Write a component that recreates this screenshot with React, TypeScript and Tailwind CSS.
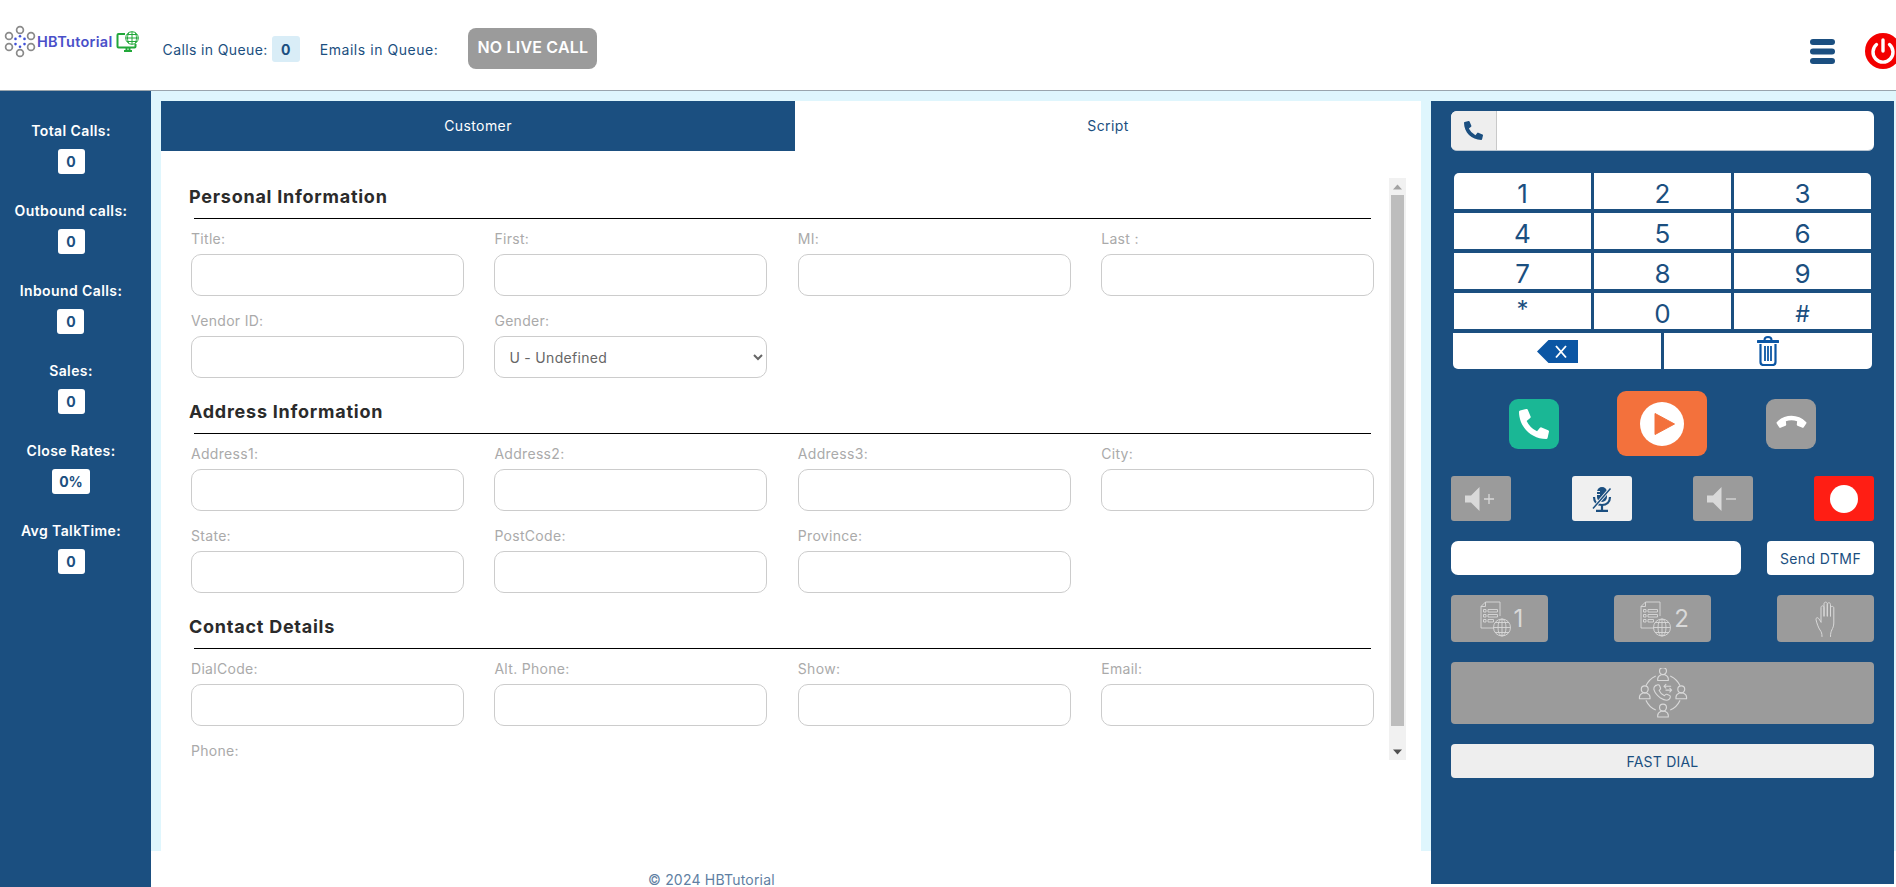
import React from "react";
import { FaPhoneAlt } from "react-icons/fa";

const stats = [
  ["Total Calls:", "0"],
  ["Outbound calls:", "0"],
  ["Inbound Calls:", "0"],
  ["Sales:", "0"],
  ["Close Rates:", "0%"],
  ["Avg TalkTime:", "0"],
];

const sections: { title: string; fields: string[] }[] = [
  { title: "Personal Information", fields: ["Title:", "First:", "MI:", "Last :", "Vendor ID:", "Gender:"] },
  { title: "Address Information", fields: ["Address1:", "Address2:", "Address3:", "City:", "State:", "PostCode:", "Province:"] },
  { title: "Contact Details", fields: ["DialCode:", "Alt. Phone:", "Show:", "Email:", "Phone:"] },
];

function Logo() {
  const rings = [
    [16, 5],
    [27, 11],
    [27, 22],
    [16, 28],
    [5, 22],
    [5, 11],
  ];
  return (
    <div className="flex items-center ml-[4px] mt-[-7px]">
      <svg width="32" height="33" viewBox="0 0 32 33" fill="none">
        {rings.map(([x, y], i) => (
          <circle key={i} cx={x} cy={y} r="3.4" stroke="#8a8a8a" strokeWidth="1.7" />
        ))}
        {[0, 60, 120, 180, 240, 300].map((a) => (
          <circle
            key={a}
            cx={16 + 5.2 * Math.sin((a * Math.PI) / 180)}
            cy={16.5 - 5.2 * Math.cos((a * Math.PI) / 180)}
            r="1.3"
            fill="#3f51d8"
          />
        ))}
      </svg>
      <span className="ml-[1px] text-[14.5px] font-semibold text-[#4a50c9] tracking-[0.3px]">HBTutorial</span>
      <svg className="ml-[3px]" width="24" height="22" viewBox="0 0 24 22" fill="none">
        <path d="M9 3H2.5a1 1 0 0 0-1 1v11.5a1 1 0 0 0 1 1h16a1 1 0 0 0 1-1V13" stroke="#22a83a" strokeWidth="2" />
        <path d="M8 20h8M10.5 17v3M13.5 17v3" stroke="#22a83a" strokeWidth="2" />
        <circle cx="16" cy="7" r="6.3" fill="#fff" stroke="#22a83a" strokeWidth="1" />
        <path d="M9.8 7h12.4M16 .8v12.4M11 3.5h10M11 10.5h10M13 1.5c-2 3.5-2 7.5 0 11M19 1.5c2 3.5 2 7.5 0 11" stroke="#22a83a" strokeWidth="1" />
      </svg>
    </div>
  );
}

function Header() {
  return (
    <header className="h-[91px] shrink-0 flex items-center bg-white border-b border-[#9aa5ad] overflow-hidden text-[14px] text-[#1b4f80]">
      <Logo />
      <span className="ml-[23px] mt-[8px] tracking-[0.38px]">Calls in Queue:</span>
      <span className="ml-[4px] mt-[8px] w-[28px] h-[26px] flex items-center justify-center rounded-[3px] bg-[#d9edf7] font-bold">0</span>
      <span className="ml-[20px] mt-[8px] tracking-[0.55px]">Emails in Queue:</span>
      <div className="ml-[30px] mt-[7px] w-[129px] h-[41px] flex items-center justify-center rounded-[8px] bg-[#9b9b9b] text-white text-[16px] font-semibold tracking-[0.2px] pb-[3px]">
        NO LIVE CALL
      </div>
      <svg className="ml-auto mt-[12px]" width="25" height="25" viewBox="0 0 25 25" fill="#1b4f80">
        <rect x="0" y="0" width="25" height="6" rx="3" />
        <rect x="0" y="9.5" width="25" height="6" rx="3" />
        <rect x="0" y="19" width="25" height="6" rx="3" />
      </svg>
      <svg className="ml-[30px] mr-[-5px] mt-[12px] shrink-0" width="36" height="36" viewBox="0 0 36 36" fill="none">
        <circle cx="18" cy="18" r="18" fill="#f30000" />
        <path d="M11.5 11.5a10 10 0 1 0 13 0" stroke="#fff" strokeWidth="3.4" strokeLinecap="round" />
        <path d="M18 7v11" stroke="#fff" strokeWidth="3.4" strokeLinecap="round" />
      </svg>
    </header>
  );
}

function Sidebar() {
  return (
    <aside className="w-[151px] shrink-0 bg-[#1b4f80] pt-[30px] pr-[9px] flex flex-col gap-[27px] items-center h-[796px]">
      {stats.map(([l, v]) => (
        <div key={l} className="flex flex-col items-center gap-[8px]">
          <div className="h-[20px] leading-[20px] text-[14px] font-semibold text-white tracking-[0.4px] whitespace-nowrap">{l}</div>
          <div className={`h-[25px] ${v.length > 1 ? "w-[38px]" : "w-[27px]"} rounded-[3px] bg-white flex items-center justify-center text-[14px] font-bold text-[#1b4f80]`}>{v}</div>
        </div>
      ))}
    </aside>
  );
}

function Field({ label }: { label: string }) {
  return (
    <div className="flex flex-col gap-[5px]">
      <div className="h-[20px] leading-[20px] text-[14px] text-[#aaaaaa] tracking-[0.3px]">{label}</div>
      {label === "Phone:" ? null : label === "Gender:" ? (
        <select defaultValue="U" className="h-[42px] w-full rounded-[10px] border border-[#cccccc] bg-white pl-[10px] pr-[4px] text-[14px] text-[#666666] tracking-[0.3px]">
          <option value="U">U - Undefined</option>
        </select>
      ) : (
        <input type="text" className="h-[42px] w-full rounded-[10px] border border-[#cccccc] bg-white" />
      )}
    </div>
  );
}

function Scrollbar() {
  return (
    <div className="w-[17px] h-[582px] shrink-0 bg-[#f1f1f1] flex flex-col items-center">
      <div className="h-[17px] flex items-center justify-center">
        <svg width="9" height="6" viewBox="0 0 9 6"><path d="M4.5 0.5 9 5.5H0z" fill="#a3a3a3" /></svg>
      </div>
      <div className="w-[13px] h-[531px] bg-[#bdbdbd]" />
      <div className="flex-1 flex items-end pb-[5px]">
        <svg width="9" height="6" viewBox="0 0 9 6"><path d="M4.5 5.5 9 .5H0z" fill="#505050" /></svg>
      </div>
    </div>
  );
}

function MainPanel() {
  return (
    <main className="w-[1260px] h-[751px] shrink-0 bg-white">
      <div className="flex h-[50px] text-[14px] tracking-[0.4px]">
        <div className="w-[634px] bg-[#1b4f80] text-white flex items-center justify-center pb-[1px]">Customer</div>
        <div className="flex-1 bg-white text-[#1b4f80] flex items-center justify-center pb-[1px]">Script</div>
      </div>
      <div className="mt-[27px] flex mr-[15px]">
        <div className="flex-1 h-[582px] pt-[6px] flex flex-col gap-[21px]">
          {sections.map((s) => (
            <section key={s.title}>
              <h2 className="ml-[28px] h-[26px] leading-[26px] text-[18px] font-bold text-[#2b2b2b] tracking-[0.75px]">{s.title}</h2>
              <div className="ml-[33px] mt-[8px] w-[1177px] h-px bg-black" />
              <div className="ml-[30px] mt-[10px] w-[1183px] grid grid-cols-4 gap-x-[30.67px] gap-y-[15px]">
                {s.fields.map((f) => (
                  <Field key={f} label={f} />
                ))}
              </div>
            </section>
          ))}
        </div>
        <Scrollbar />
      </div>
    </main>
  );
}

function Speaker({ sign }: { sign: "+" | "-" }) {
  return (
    <svg width="34" height="26" viewBox="0 0 34 26" fill="none">
      <path d="M1 9.5h6L15.5 1v24L7 16.5H1z" fill="#d9d9d9" />
      <path d={sign === "+" ? "M20 13h10M25 8v10" : "M20 13h10"} stroke="#d9d9d9" strokeWidth="1.3" />
    </svg>
  );
}

function MicOff() {
  return (
    <svg width="20" height="26" viewBox="0 0 20 26" fill="none">
      <rect x="5" y="1" width="10" height="15" rx="5" fill="#1b4f80" />
      <path d="M5 5.500h3M5 8.500h3" stroke="#f0f0f0" strokeWidth="1" />
      <path d="M2 11c0 5 3.500 8 8 8s8-3 8-8" stroke="#1b4f80" strokeWidth="2.200" />
      <path d="M10 19v5M4 24.800h12" stroke="#1b4f80" strokeWidth="2.200" />
      <path d="M1.500 22 18 3" stroke="#f0f0f0" strokeWidth="3.400" />
      <path d="M1 22.500 18.500 2.500" stroke="#1b4f80" strokeWidth="1.500" />
    </svg>
  );
}

function DocGlobe() {
  return (
    <svg width="31" height="36" viewBox="0 0 31 36" fill="none" stroke="#d9d9d9" strokeWidth="0.9">
      <path d="M14 27H1V5.500L5.500 1H20v14" />
      <path d="M5.500 1v4.500H1" />
      <path d="M3.500 8.500h2.500v2.500H3.500zM3.500 13.500h2.500v2.500H3.500zM3.500 18.500h2.500v2.500H3.500zM8 8.500h9.500v2.500H8zM8 13.500h9.500v2.500H8zM8 18.500h5.500v2.500H8z" />
      <circle cx="22" cy="26.500" r="8.500" />
      <ellipse cx="22" cy="26.500" rx="4" ry="8.500" />
      <path d="M22 18v17M13.500 26.500h17M15 21.500h14M15 31.500h14" />
    </svg>
  );
}

function HandIcon() {
  return (
    <svg width="21" height="36" viewBox="0 0 21 36" fill="none" stroke="#d9d9d9" strokeWidth="1" strokeLinecap="round" strokeLinejoin="round">
      <path d="M7 35.500c0-3-.5-4.500-2-6.500C3.500 27 1.500 21.500 1 18.500c-.3-1.800 1.800-2.500 2.700-1l2.300 3.500" />
      <path d="M6 21V6.500c0-2.200 3-2.200 3 0V15" />
      <path d="M9 15V3c0-2.500 3.300-2.500 3.300 0v12" />
      <path d="M12.300 15V3.500c0-2.300 3.200-2.300 3.200 0V15" />
      <path d="M15.500 15V7c0-2.200 3.300-2.200 3.300 0v15c0 3-1 5-2 7-.8 1.800-1.300 3.500-1.300 6.500" />
    </svg>
  );
}

function Person({ x, y }: { x: number; y: number }) {
  return (
    <g transform={`translate(${x} ${y})`}>
      <circle cx="0" cy="-3.800" r="3.600" />
      <path d="M-5.500 6v-1.800c0-2 1.200-3.200 3.500-4.200h4c2.300 1 3.500 2.200 3.500 4.200V6z" />
    </g>
  );
}

function Transfer() {
  return (
    <svg width="50" height="50" viewBox="0 0 52 52" fill="none" stroke="#d9d9d9" strokeWidth="1.200" strokeLinejoin="round" strokeLinecap="round">
      <Person x={26} y={7} />
      <Person x={26} y={45} />
      <Person x={7} y={26} />
      <Person x={45} y={26} />
      <path d="M34 8.500a20 20 0 0 1 9.500 9.500M8.500 18a20 20 0 0 1 9.500-9.500M8.500 34a20 20 0 0 0 9.500 9.500M43.500 34a20 20 0 0 1-9.500 9.500" />
      <path d="M18.500 18.500c1.500-1.500 3.500-1.500 4 0l1 2.500c.3 1-.5 1.500-1.500 2.300 1 2.500 3 4.500 5.500 5.500.8-1 1.500-1.800 2.300-1.500l2.700 1c1.500.5 1.500 2.500 0 4-2 2-5 1.500-9-1-3.500-2.500-6-5.500-7-9-.5-1.800.5-3 2-4.300z" />
      <path d="M27 19h7M27 19l2-2M27 19l2 2M35 23h-6M35 23l-2-2M35 23l-2 2" strokeWidth="1.100" />
    </svg>
  );
}

function Dialer() {
  const keys = ["1", "2", "3", "4", "5", "6", "7", "8", "9", "*", "0", "#"];
  return (
    <aside className="w-[463px] h-[783px] shrink-0 bg-[#1b4f80] px-[20px] pt-[10px]">
      <div className="h-[40px] flex rounded-[6px] overflow-hidden bg-white border-b border-[#b5c2cf]">
        <div className="w-[46px] bg-[#eeeeee] border-r border-[#c9c9c9] flex items-center justify-center">
          <FaPhoneAlt className="text-[#1b4f80] w-[19px] h-[19px]" />
        </div>
      </div>

      <div className="mt-[22px] mx-[3px] grid grid-cols-3 gap-x-[3px] gap-y-[4px] rounded-t-[5px] overflow-hidden">
        {keys.map((k) => (
          <div key={k} className={`h-[36px] bg-white flex items-center justify-center text-[#1b4f80] ${k === "*" ? "text-[24px] pb-[2px]" : k === "#" ? "text-[23px] pt-[6px]" : "text-[26px] pt-[5px]"}`}>
            {k}
          </div>
        ))}
      </div>
      <div className="mt-[4px] mx-[2px] grid grid-cols-2 gap-x-[3px] rounded-b-[5px] overflow-hidden">
        <div className="h-[36px] bg-white flex items-center justify-center">
          <svg width="41" height="23" viewBox="0 0 41 23">
            <path d="M0 11.500 11.500 0H41v23H11.500z" fill="#0b56a4" />
            <path d="M19 6l10 11.500M29 6 19 17.500" stroke="#fff" strokeWidth="1.900" />
          </svg>
        </div>
        <div className="h-[36px] bg-white flex items-center justify-center pb-[1px]">
          <svg width="22" height="30" viewBox="0 0 22 30" fill="none" stroke="#0b56a4">
            <path d="M1 5.500h20" strokeWidth="3" strokeLinecap="round" />
            <path d="M7.500 4c0-2 1-3 3.500-3s3.500 1 3.500 3" strokeWidth="2" />
            <path d="M3.500 8v18c0 2 1 3 3 3h9c2 0 3-1 3-3V8" strokeWidth="2.200" />
            <path d="M8 10v15M11 10v15M14 10v15" strokeWidth="1.800" />
          </svg>
        </div>
      </div>

      <div className="mt-[22px] h-[65px] flex items-center justify-center gap-[58px]">
        <div className="w-[50px] h-[50px] rounded-[9px] bg-[#1ab795] flex items-center justify-center">
          <FaPhoneAlt className="text-white w-[30px] h-[30px]" />
        </div>
        <div className="w-[90px] h-[65px] rounded-[9px] bg-[#f3713c] flex items-center justify-center">
          <svg width="44" height="44" viewBox="0 0 44 44">
            <circle cx="22" cy="22" r="22" fill="#fff" />
            <path d="M15 11.500 34.500 22 15 32.500z" fill="#f3713c" strokeLinejoin="round" stroke="#f3713c" />
          </svg>
        </div>
        <div className="w-[50px] h-[50px] rounded-[9px] bg-[#9b9b9b] flex items-center justify-center ml-[1px]">
          <FaPhoneAlt className="text-white w-[23px] h-[23px] rotate-[135deg]" />
        </div>
      </div>

      <div className="mt-[20px] h-[45px] flex justify-between">
        <div className="w-[60px] rounded-[3px] bg-[#9b9b9b] flex items-center justify-center"><Speaker sign="+" /></div>
        <div className="w-[60px] rounded-[3px] bg-[#f0f0f0] flex items-center justify-center"><MicOff /></div>
        <div className="w-[60px] rounded-[3px] bg-[#9b9b9b] flex items-center justify-center"><Speaker sign="-" /></div>
        <div className="w-[60px] rounded-[3px] bg-[#ff1e14] flex items-center justify-center"><div className="w-[28px] h-[28px] rounded-full bg-white" /></div>
      </div>

      <div className="mt-[20px] h-[34px] flex justify-between">
        <input type="text" className="w-[290px] rounded-[7px] bg-white" />
        <div className="w-[107px] rounded-[4px] bg-white flex items-center justify-center text-[14px] text-[#1b4f80] tracking-[0.4px]">Send DTMF</div>
      </div>

      <div className="mt-[20px] h-[47px] flex justify-between">
        <div className="w-[97px] rounded-[4px] bg-[#9b9b9b] flex items-center justify-center gap-[3px] pl-[4px] text-[#d9d9d9] text-[24px]"><DocGlobe />1</div>
        <div className="w-[97px] rounded-[4px] bg-[#9b9b9b] flex items-center justify-center gap-[3px] pl-[4px] text-[#d9d9d9] text-[24px]"><DocGlobe />2</div>
        <div className="w-[97px] rounded-[4px] bg-[#9b9b9b] flex items-center justify-center"><HandIcon /></div>
      </div>

      <div className="mt-[20px] h-[62px] rounded-[4px] bg-[#9b9b9b] flex items-center justify-center"><Transfer /></div>
      <div className="mt-[20px] h-[34px] rounded-[4px] bg-[#eeeeee] flex items-center justify-center text-[14px] text-[#1b4f80] tracking-[0.2px]">FAST DIAL</div>
    </aside>
  );
}

export default function App() {
  return (
    <div className="w-[1896px] h-[887px] overflow-hidden bg-white flex flex-col [font-family:Inter,'Liberation_Sans',sans-serif]">
      <Header />
      <div className="flex flex-1">
        <Sidebar />
        <div className="flex-1 flex flex-col">
          <div className="h-[760px] shrink-0 bg-[#dff6fd] pt-[10px] pl-[10px] pr-[2px] flex gap-[10px] items-start">
            <MainPanel />
            <Dialer />
          </div>
          <footer className="pl-[497px] pt-[22px] text-[14px] leading-[14px] text-[#5f7fa3] tracking-[0.2px]">© 2024 HBTutorial</footer>
        </div>
      </div>
    </div>
  );
}
